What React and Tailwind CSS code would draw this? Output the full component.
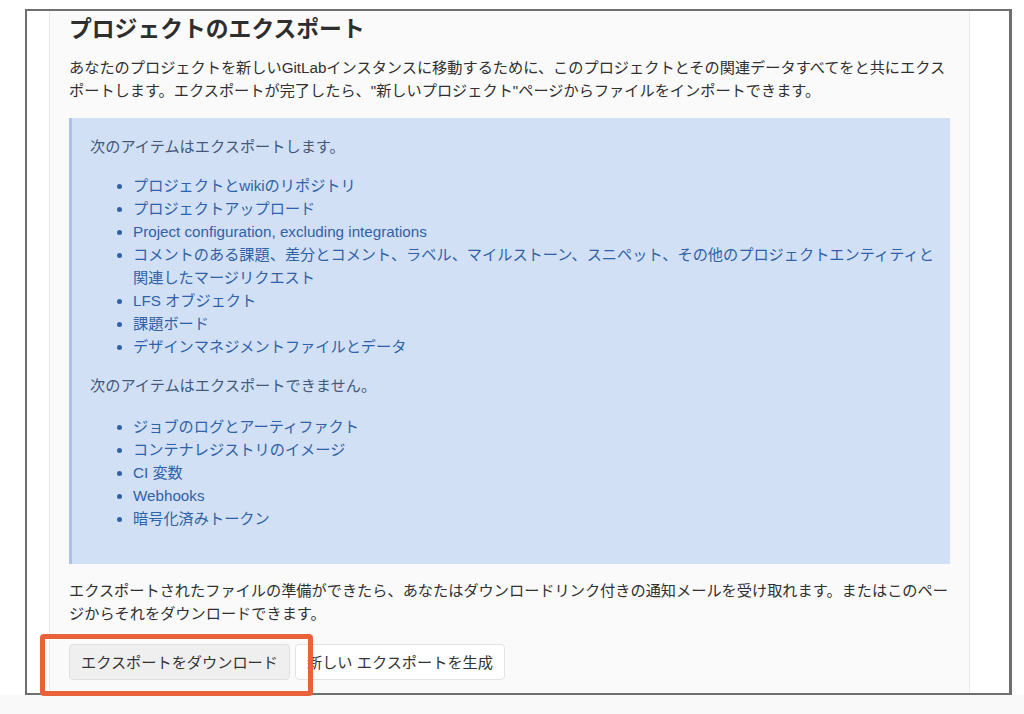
import React from 'react'

const exported = [
    'プロジェクトとwikiのリポジトリ',
    'プロジェクトアップロード',
    'Project configuration, excluding integrations',
    'コメントのある課題、差分とコメント、ラベル、マイルストーン、スニペット、その他のプロジェクトエンティティと関連したマージリクエスト',
    'LFS オブジェクト',
    '課題ボード',
    'デザインマネジメントファイルとデータ',
]

const notExported = [
    'ジョブのログとアーティファクト',
    'コンテナレジストリのイメージ',
    'CI 変数',
    'Webhooks',
    '暗号化済みトークン',
]

const font = { fontFamily: '"Liberation Sans", "Noto Sans CJK JP", sans-serif' }

const ItemList = ({ items }) => (
    <ul className="list-disc pl-[43px] mb-4 text-[#3062a8]">
        {items.map((item, i) => (
            <li key={i}>{item}</li>
        ))}
    </ul>
)

const App = () => {
    return (
        <div className="relative w-[1024px] h-[714px] bg-white overflow-hidden" style={font}>
            <div className="pt-[9px] pl-[25px] bg-white">
                {/* framed screenshot */}
                <div className="w-[987px] h-[686px] flex overflow-hidden border-solid border-t-2 border-l-2 border-b-2 border-r-[3px] border-[#6f6f6f]">
                    <div className="w-[22px] shrink-0 bg-white" />

                    <div className="w-[921px] shrink-0 bg-[#fafafa] border-x border-[#e8e8e8] px-[19px] pt-[3px] text-[15.2px] leading-[23px] text-[#303030]">
                        {/* Title */}
                        <h2 className="text-[22.8px] leading-[30px] font-bold text-[#2e2e2e]">
                            プロジェクトのエクスポート
                        </h2>

                        <p className="mt-3">
                            あなたのプロジェクトを新しいGitLabインスタンスに移動するために、このプロジェクトとその関連データすべてをと共にエクスポートします。エクスポートが完了したら、"新しいプロジェクト"ページからファイルをインポートできます。
                        </p>

                        {/* Info box */}
                        <div className="mt-4 bg-[#d1e0f5] border-l-[3px] border-[#a9c4ea] pl-[18px] pr-3 pt-[17px] pb-[18px]">
                            <p className="mb-4 text-[#44587a]">次のアイテムはエクスポートします。</p>
                            <ItemList items={exported} />
                            <p className="mb-[18px] text-[#44587a]">次のアイテムはエクスポートできません。</p>
                            <ItemList items={notExported} />
                        </div>

                        <p className="mt-[15px]">
                            エクスポートされたファイルの準備ができたら、あなたはダウンロードリンク付きの通知メールを受け取れます。またはこのページからそれをダウンロードできます。
                        </p>

                        {/* Buttons */}
                        <div className="flex gap-[5px] mt-[19px]">
                            <button className="h-9 px-[11px] rounded border border-[#e0e0e0] bg-[#efefef] text-[#333]">
                                エクスポートをダウンロード
                            </button>
                            <button className="h-9 px-[11px] rounded border border-[#e3e3e3] bg-white text-[#333]">
                                新しい エクスポートを生成
                            </button>
                        </div>
                    </div>

                    <div className="flex-1 bg-white" />
                </div>
            </div>

            <div className="h-[19px] bg-[#f9f9f9]" />

            {/* annotation highlight */}
            <div className="pointer-events-none absolute left-[40px] top-[634px] w-[273px] h-[62px] border-[5px] border-[#ea623a] rounded-[4px]" />
        </div>
    )
}

export default App
